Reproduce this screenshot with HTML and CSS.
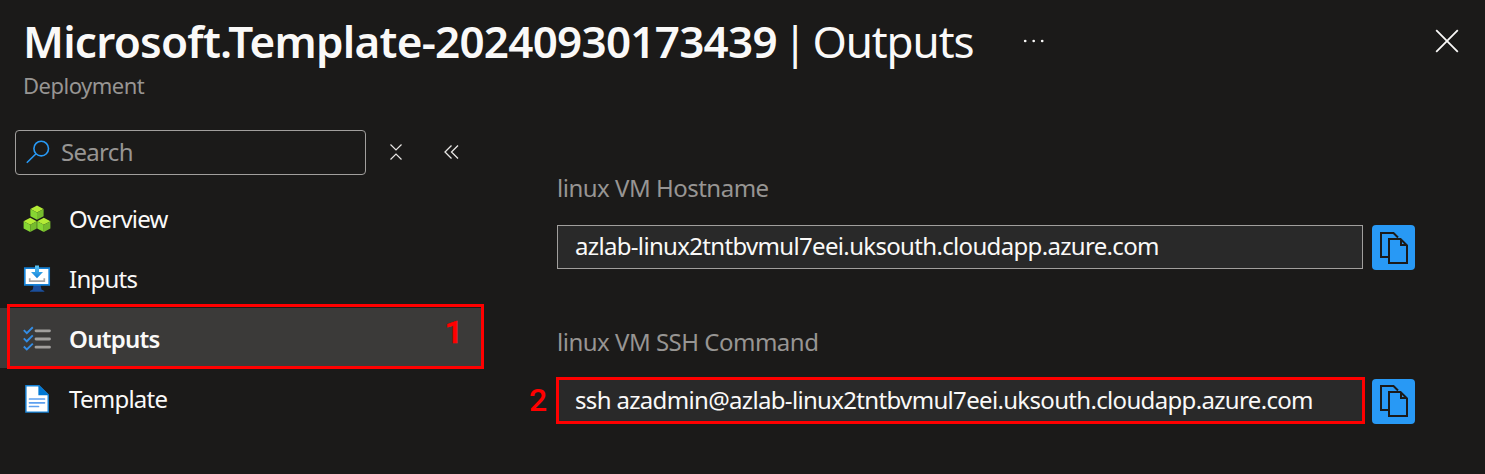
FILE: index.html
```html
<!DOCTYPE html>
<html lang="en">
<head>
<meta charset="utf-8">
<title>Microsoft.Template-20240930173439 | Outputs</title>
<link rel="stylesheet" href="styles.css">
</head>
<body>
<header class="header">
  <div class="title-row">
    <h1 class="title"><span class="title-name">Microsoft.Template-20240930173439</span><span class="title-page">| Outputs</span></h1>
    <svg class="more" width="22" height="6" viewBox="0 0 22 6" fill="#faf9f8"><circle cx="2.2" cy="3" r="1.35"/><circle cx="10.7" cy="3" r="1.35"/><circle cx="19.2" cy="3" r="1.35"/></svg>
    <svg class="close" width="24" height="24" viewBox="0 0 24 24" fill="none" stroke="#faf9f8" stroke-width="1.8"><path d="M1.2 1.2 22.8 22.8M22.8 1.2 1.2 22.8"/></svg>
  </div>
  <p class="subtitle">Deployment</p>
</header>
<div class="layout">
  <nav class="sidebar">
    <div class="tools">
      <div class="search">
        <svg width="24" height="24" viewBox="0 0 24 24" fill="none" stroke="#2899f5" stroke-width="1.6"><circle cx="15.2" cy="8.6" r="7.3"/><path d="M10 13.8.8 22.8"/></svg>
        <span class="search-text">Search</span>
      </div>
      <svg class="collapse" width="12" height="16" viewBox="0 0 12 16" fill="none" stroke="#e8e6e4" stroke-width="1.2"><path d="M.5.5 6 6 11.500.5M.5 15.500 6 10 11.500 15.500"/></svg>
      <svg class="chevrons" width="15" height="14" viewBox="0 0 15 14" fill="none" stroke="#e8e6e4" stroke-width="1.3"><path d="M7.500.5 1 7 7.500 13.500M14 .5 7.500 7 14 13.500"/></svg>
    </div>
    <ul class="menu">
      <li class="item">
        <svg class="icon" width="28" height="28" viewBox="0 0 28 28">
          <g id="cube"><path fill="#b4ec36" d="m14 .5 6.600 3.400L14 7.500 7.400 3.900z"/><path fill="#86d633" d="M7.400 3.900 14 7.500v7.200l-6.600-3.500z"/><path fill="#76bc2d" d="m20.600 3.900-6.600 3.600v7.200l6.600-3.500z"/></g>
          <use href="#cube" x="-6.800" y="12.300"/><use href="#cube" x="6.800" y="12.300"/>
        </svg>
        <span class="name">Overview</span>
      </li>
      <li class="item">
        <svg class="icon" width="28" height="28" viewBox="0 0 28 28">
          <defs><linearGradient id="arrow" x1="0" y1="0" x2="0" y2="1"><stop offset="0" stop-color="#5ec7f5"/><stop offset="1" stop-color="#0f7fd8"/></linearGradient></defs>
          <path fill="#1b4f9c" d="M10.500 20h7l1 4.500 2.800 1.600v.7H7v-.7l2.800-1.600z"/>
          <path fill="#fff" stroke="#1683d8" stroke-width="1.700" d="M1.800 3.200h24.400v16.600H1.800z"/>
          <path fill="none" stroke="#a6a6a6" stroke-width="1.700" d="M6.700 13.300v2.800h14.600v-2.800"/>
          <path fill="url(#arrow)" d="M12 .6h4v6.500h4l-6 6.200-6-6.200h4z"/>
        </svg>
        <span class="name">Inputs</span>
      </li>
      <li class="item selected">
        <svg class="icon" width="28" height="28" viewBox="0 0 28 28" fill="none">
          <g stroke="#338de6" stroke-width="1.900"><path d="m.8 5.100 3 3L9.800 2.200M.8 13.300l3 3 6-5.900M.8 21.500l3 3 6-5.900"/></g>
          <path stroke="#a19f9d" stroke-width="2.800" stroke-linecap="round" d="M13 5.800h13.500M13 14h13.500M13 22.200h13.500"/>
        </svg>
        <span class="name">Outputs</span>
        <span class="callout"><b class="one">1</b></span>
      </li>
      <li class="item">
        <svg class="icon" width="28" height="28" viewBox="0 0 28 28">
          <path fill="#fff" stroke="#1683d8" stroke-width="1.400" d="M2.900.8H16l9.200 9v17.300H2.900z"/>
          <path fill="#0078d4" d="M15.400.1 25.800 10.300H15.400z"/>
          <path stroke="#5ea0ef" stroke-width="1.700" stroke-linecap="round" d="M6.500 14h15M6.500 17.800h15M6.500 21.500h9"/>
        </svg>
        <span class="name">Template</span>
      </li>
    </ul>
  </nav>
  <main class="main">
    <section class="field">
      <h2 class="label">linux VM Hostname</h2>
      <div class="row">
        <div class="value"><span>azlab-linux2tntbvmul7eei.uksouth.cloudapp.azure.com</span></div>
        <button class="copy" aria-label="Copy hostname"><svg width="28" height="32" viewBox="0 0 28 32" fill="none" stroke="#1b1a19" stroke-width="2"><path id="pages" d="M9 25H1V1h12.500L18 5.500M20.500 7H9v24h18V13.500zM21 7v6h6"/></svg></button>
      </div>
    </section>
    <section class="field">
      <h2 class="label">linux VM SSH Command</h2>
      <div class="row">
        <div class="value marked"><span>ssh azadmin@azlab-linux2tntbvmul7eei.uksouth.cloudapp.azure.com</span><b class="two">2</b></div>
        <button class="copy raised" aria-label="Copy command"><svg width="28" height="32" viewBox="0 0 28 32" fill="none" stroke="#1b1a19" stroke-width="2"><use href="#pages"/></svg></button>
      </div>
    </section>
  </main>
</div>
</body>
</html>
```

FILE: styles.css
```css
* { box-sizing: border-box; }
body {
  margin: 0;
  height: 474px;
  overflow: hidden;
  background: #1b1a19;
  color: #faf9f8;
  font: 24px/32px "Noto Sans", "Open Sans", sans-serif;
}
svg { display: block; flex: none; }
.header { height: 130px; padding: 11px 26px 0 23px; }
.title-row { display: flex; align-items: center; height: 60px; }
.title { display: flex; gap: 13px; width: 1000px; margin: 0; font-size: 44px; line-height: 60px; font-weight: 600; white-space: nowrap; }
.title-name { width: 747px; letter-spacing: -0.75px; }
.title-page { font-weight: 400; letter-spacing: -1.1px; word-spacing: -4px; }
.close { margin-left: auto; }
.subtitle { margin: 0; color: #979593; font-size: 22px; line-height: 28px; letter-spacing: -0.5px; }
.layout { display: flex; }
.sidebar { width: 484px; }
.tools { display: flex; align-items: center; padding-left: 15px; }
.search { display: flex; align-items: center; gap: 11px; width: 351px; height: 45px; padding: 0 0 2px 10px; border: 1px solid #a19f9d; border-radius: 4px; color: #979593; letter-spacing: -0.7px; }
.collapse { margin: -1px 0 0 24px; }
.chevrons { margin: -2px 0 0 42px; }
.menu { list-style: none; margin: 13px 0 0; padding: 0; }
.item { position: relative; display: flex; align-items: center; gap: 18px; height: 60px; padding: 2px 0 0 23px; letter-spacing: -0.75px; }
.selected { width: 482px; background: #3b3a39; font-weight: 600; }
.callout { position: absolute; left: 7px; top: -4px; width: 477px; height: 65px; border: 3px solid #f00; box-shadow: inset 0 1px #1b1a19; }
.one, .two { position: absolute; color: #f00; font: 500 32px/32px Roboto, "Liberation Sans", sans-serif; letter-spacing: 0; }
.one { right: 18px; top: 9px; -webkit-text-stroke: 0.7px #f00; }
.main { padding: 42px 0 0 73px; }
.field { height: 154px; }
.label { margin: 0 0 21px; color: #979593; font-size: 24px; line-height: 32px; font-weight: 400; letter-spacing: -0.5px; }
.row { display: flex; gap: 9px; height: 45px; }
.value { position: relative; width: 806px; height: 44px; padding: 4px 17px; border: 1px solid #a19f9d; background: #292929; white-space: nowrap; letter-spacing: -0.67px; }
.marked { width: 809px; height: 47px; margin: -2px -2px 0 -1px; padding: 4px 16px; border: 3px solid #f00; }
.two { left: -30px; top: 4px; }
.copy { display: grid; place-items: center; width: 43px; height: 45px; padding: 0; border: 0; border-radius: 4px; background: #2899f5; }
.raised { padding-bottom: 1px; }
```
